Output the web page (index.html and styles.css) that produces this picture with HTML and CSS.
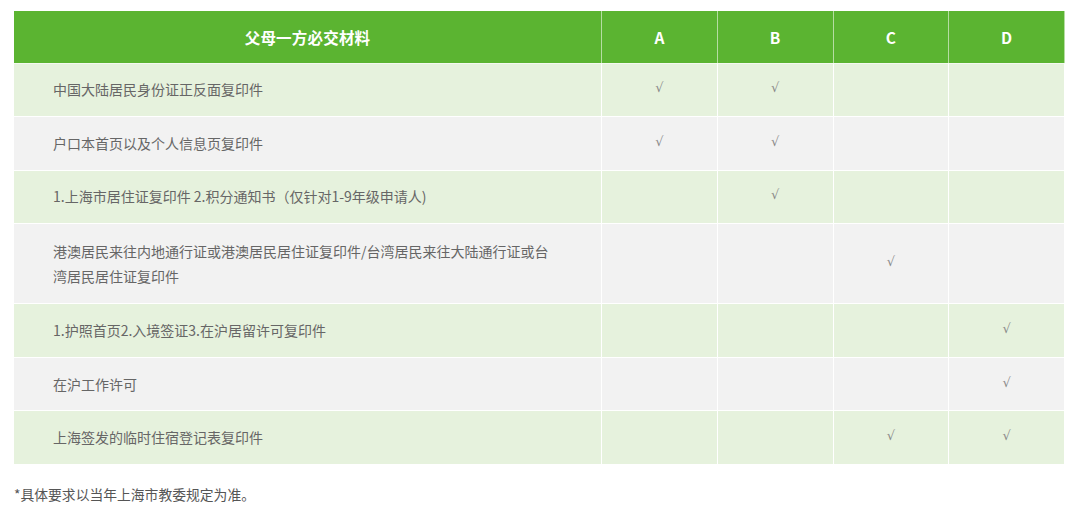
FILE: index.html
```html
<!DOCTYPE html>
<html lang="zh-CN">
<head>
<meta charset="utf-8">
<title>父母一方必交材料</title>
<link rel="stylesheet" href="styles.css">
</head>
<body>
<main class="page">
  <table class="materials">
    <colgroup>
      <col class="col-name">
      <col class="col-opt">
      <col class="col-opt">
      <col class="col-opt">
      <col class="col-opt">
    </colgroup>
    <thead>
      <tr class="head-row">
        <th class="head-title">父母一方必交材料</th>
        <th>A</th>
        <th>B</th>
        <th>C</th>
        <th>D</th>
      </tr>
    </thead>
    <tbody>
      <tr class="row green">
        <td class="name">中国大陆居民身份证正反面复印件</td>
        <td class="mark">√</td><td class="mark">√</td><td class="mark"></td><td class="mark"></td>
      </tr>
      <tr class="row gray">
        <td class="name">户口本首页以及个人信息页复印件</td>
        <td class="mark">√</td><td class="mark">√</td><td class="mark"></td><td class="mark"></td>
      </tr>
      <tr class="row green">
        <td class="name">1.上海市居住证复印件 2.积分通知书（仅针对1-9年级申请人)</td>
        <td class="mark"></td><td class="mark">√</td><td class="mark"></td><td class="mark"></td>
      </tr>
      <tr class="row gray tall">
        <td class="name">港澳居民来往内地通行证或港澳居民居住证复印件/台湾居民来往大陆通行证或台<br>湾居民居住证复印件</td>
        <td class="mark"></td><td class="mark"></td><td class="mark">√</td><td class="mark"></td>
      </tr>
      <tr class="row green">
        <td class="name">1.护照首页2.入境签证3.在沪居留许可复印件</td>
        <td class="mark"></td><td class="mark"></td><td class="mark"></td><td class="mark">√</td>
      </tr>
      <tr class="row gray">
        <td class="name">在沪工作许可</td>
        <td class="mark"></td><td class="mark"></td><td class="mark"></td><td class="mark">√</td>
      </tr>
      <tr class="row green">
        <td class="name">上海签发的临时住宿登记表复印件</td>
        <td class="mark"></td><td class="mark"></td><td class="mark">√</td><td class="mark">√</td>
      </tr>
    </tbody>
  </table>
  <p class="note">*具体要求以当年上海市教委规定为准。</p>
</main>
</body>
</html>
```

FILE: styles.css
```css
html, body {
  margin: 0;
  padding: 0;
  background: #ffffff;
}

body {
  font-family: "Noto Sans CJK SC", "Noto Sans", "Liberation Sans", sans-serif;
  color: #666666;
}

.page {
  padding: 11px 0 0 13px;
}

.materials {
  width: 1051px;
  border-collapse: collapse;
  table-layout: fixed;
}

.col-name {
  width: 588px;
}

.col-opt {
  width: 115.75px;
}

.materials th,
.materials td {
  border: 1px solid #ffffff;
  padding: 0;
}

.head-row {
  height: 52px;
  background: #5bb431;
}

.head-row th {
  color: #ffffff;
  font-size: 15.5px;
  font-weight: 700;
  text-align: center;
  border-color: rgba(255, 255, 255, 0.55);
  border-top: none;
}

.head-row .head-title {
  letter-spacing: 0.2px;
}

.row {
  height: 53.6px;
}

.row.tall {
  height: 80px;
}

.green {
  background: #e6f2dd;
}

.gray {
  background: #f2f2f2;
}

.name {
  font-size: 14px;
  line-height: 25px;
  padding-left: 39px !important;
  color: #666666;
  text-align: left;
}

.mark {
  text-align: center;
  font-family: "DejaVu Serif", "Liberation Serif", serif;
  font-size: 13px;
  color: #8a8a8a;
  padding-bottom: 4px !important;
}

.note {
  margin: 19px 0 0 1px;
  font-size: 13.8px;
  color: #555555;
}
```
